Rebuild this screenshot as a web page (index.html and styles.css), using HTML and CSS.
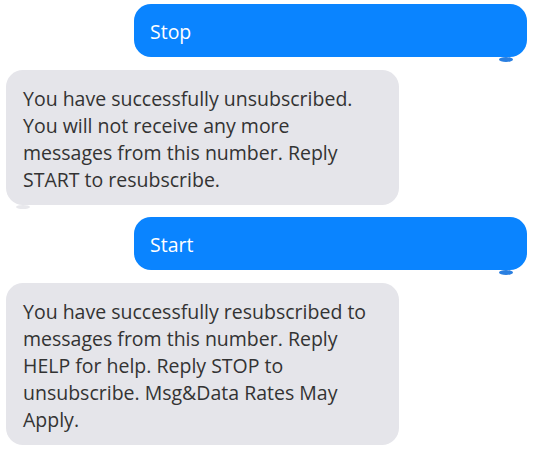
FILE: index.html
```html
<!DOCTYPE html>
<html lang="en">
<head>
    <meta charset="UTF-8">
    <title>Messages</title>
    <link rel="stylesheet" href="styles.css">
</head>
<body>
    <div class="thread">
        <div class="msg msg-out">
            <div class="bubble">Stop</div>
        </div>
        <div class="msg msg-in">
            <div class="bubble">You have successfully unsubscribed.<br>You will not receive any more<br>messages from this number. Reply<br>START to resubscribe.</div>
        </div>
        <div class="msg msg-out">
            <div class="bubble">Start</div>
        </div>
        <div class="msg msg-in">
            <div class="bubble">You have successfully resubscribed to<br>messages from this number. Reply<br>HELP for help. Reply STOP to<br>unsubscribe. Msg&amp;Data Rates May<br>Apply.</div>
        </div>
    </div>
</body>
</html>
```
FILE: styles.css
```css
body {
    margin: 0;
    background: #fff;
    font-family: "Open Sans", "Segoe UI", sans-serif;
    color: #333;
}

.thread {
    display: flex;
    flex-direction: column;
    gap: 12.5px;
    padding: 4px 16px 0 6px;
}

.msg {
    position: relative;
    display: flex;
}

.msg-out { justify-content: flex-end; }
.msg-in { justify-content: flex-start; }

.bubble {
    width: 393px;
    box-sizing: border-box;
    border-radius: 17px;
    font-size: 19.5px;
    line-height: 27px;
    white-space: nowrap;
}

.msg-out .bubble {
    background: #0a84ff;
    color: #fff;
    padding: 14px 16px 12px;
}

.msg-in .bubble {
    background: #e5e5ea;
    color: #333;
    padding: 15px 17px 12px;
}

/* little tails peeking out under the bubbles */
.msg-out::after {
    content: "";
    position: absolute;
    right: 14px;
    bottom: -5px;
    width: 14px;
    height: 5px;
    border-radius: 50%;
    background: #2a7fe0;
}

.msg-in::after {
    content: "";
    position: absolute;
    left: 10px;
    bottom: -4px;
    width: 14px;
    height: 4px;
    border-radius: 50%;
    background: #e8e8ec;
}
```
